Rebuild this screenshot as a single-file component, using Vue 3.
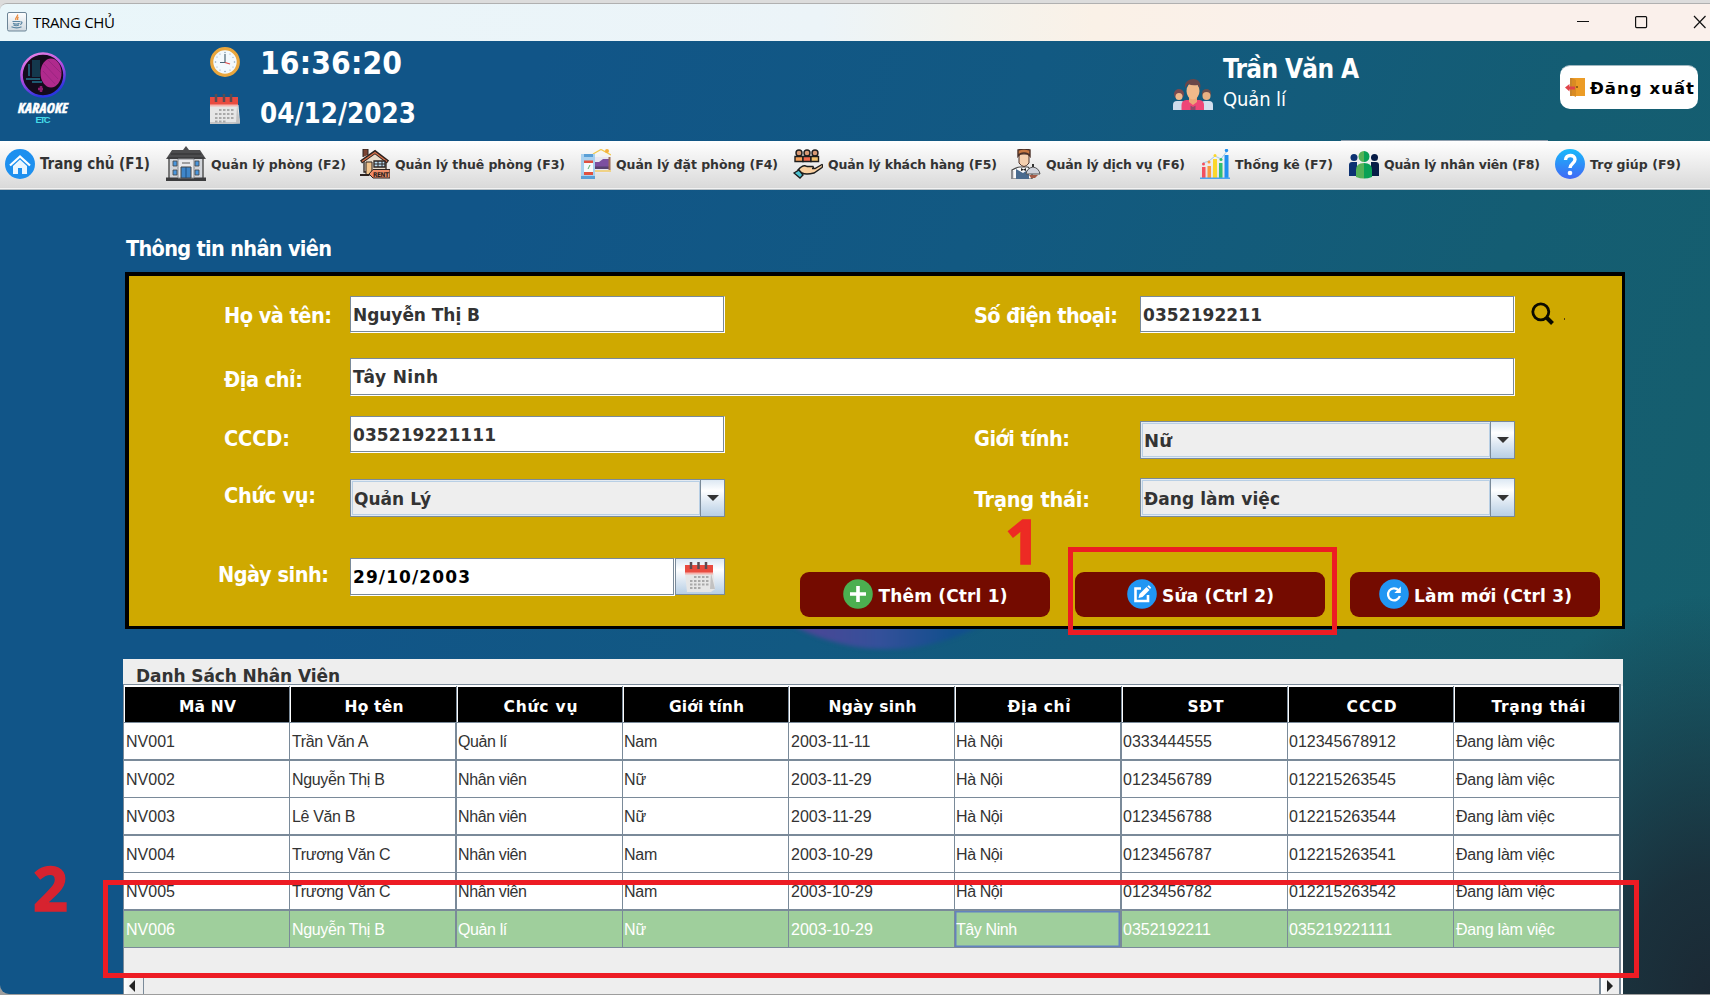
<script setup>
// Tracks the letters of a label so that it fills the given width in pixels.
const vFit = {
  mounted(el, { value }) {
    if (!value) return
    const count = el.textContent.normalize('NFC').length
    const width = el.getBoundingClientRect().width
    const gap = (value - width) / Math.max(count - 1, 1)
    el.style.letterSpacing = `${gap.toFixed(3)}px`
    el.style.marginRight = `${(-gap).toFixed(3)}px`
  },
}

const menu = [
  { icon: 'home', text: 'Trang chủ (F1)', w: 110, big: true },
  { icon: 'building', text: 'Quản lý phòng (F2)', w: 135 },
  { icon: 'rent', text: 'Quản lý thuê phòng (F3)', w: 170 },
  { icon: 'booking', text: 'Quản lý đặt phòng (F4)', w: 162 },
  { icon: 'customers', text: 'Quản lý khách hàng (F5)', w: 169 },
  { icon: 'waiter', text: 'Quản lý dịch vụ (F6)', w: 139 },
  { icon: 'chart', text: 'Thống kê (F7)', w: 98 },
  { icon: 'staff', text: 'Quản lý nhân viên (F8)', w: 156 },
  { icon: 'help', text: 'Trợ giúp (F9)', w: 91 },
]

const columns = [
  { text: 'Mã NV', w: 57 },
  { text: 'Họ tên', w: 59 },
  { text: 'Chức vụ', w: 74 },
  { text: 'Giới tính', w: 75 },
  { text: 'Ngày sinh', w: 88 },
  { text: 'Địa chỉ', w: 63 },
  { text: 'SĐT', w: 36 },
  { text: 'CCCD', w: 50 },
  { text: 'Trạng thái', w: 94 },
]

const rows = [
  ['NV001', 'Trần Văn A', 'Quản lí', 'Nam', '2003-11-11', 'Hà Nội', '0333444555', '012345678912', 'Đang làm việc'],
  ['NV002', 'Nguyễn Thị B', 'Nhân viên', 'Nữ', '2003-11-29', 'Hà Nội', '0123456789', '012215263545', 'Đang làm việc'],
  ['NV003', 'Lê Văn B', 'Nhân viên', 'Nữ', '2003-11-29', 'Hà Nội', '0123456788', '012215263544', 'Đang làm việc'],
  ['NV004', 'Trương Văn C', 'Nhân viên', 'Nam', '2003-10-29', 'Hà Nội', '0123456787', '012215263541', 'Đang làm việc'],
  ['NV005', 'Trương Văn C', 'Nhân viên', 'Nam', '2003-10-29', 'Hà Nội', '0123456782', '012215263542', 'Đang làm việc'],
  ['NV006', 'Nguyễn Thị B', 'Quản lí', 'Nữ', '2003-10-29', 'Tây Ninh', '0352192211', '035219221111', 'Đang làm việc'],
]
</script>

<template>
  <div class="screen">
    <div class="window">
      <div class="titlebar">
        <svg class="java" viewBox="0 0 20 20">
          <defs><linearGradient id="jv" x1="0" y1="0" x2="0" y2="1"><stop offset="0" stop-color="#fff" /><stop offset="1" stop-color="#cfd9e0" /></linearGradient></defs>
          <rect x=".5" y=".5" width="19" height="18.5" rx="1.5" fill="url(#jv)" stroke="#6d8597" />
          <path d="M10.5 2.5c1 2-3 3-1.500 5.500M11.500 5c-1.500 1-1 1.800-.8 3" fill="none" stroke="#ea8a3c" stroke-width="1.300" />
          <path d="M5.500 9.500h7.500M6 11.300c1.500 1 5 1 6.500 0M6.500 13c1.500.8 4 .8 5.500 0M4.500 14.800c2.500 1.400 8 1.400 10 0M13.300 9.800c2.500-.5 2 2.200-.3 2.700" fill="none" stroke="#5b86a3" stroke-width="1.200" />
        </svg>
        <span v-fit="82" class="caption">TRANG CHỦ</span>
        <svg class="controls" viewBox="0 0 134 14">
          <g fill="none" stroke="#111" stroke-width="1.200">
            <path d="M1 6.500h12" /><rect x="59.600" y="1.600" width="11" height="11" rx="1" /><path d="M118 1l11.500 12M129.500 1L118 13" />
          </g>
        </svg>
      </div>

      <div class="body">
        <div class="glow"></div>
        <header class="header">
          <div class="logo">
            <svg class="logo-mark" viewBox="0 0 48 46">
              <defs><linearGradient id="ring" x1="0" y1="0" x2=".4" y2="1"><stop offset="0" stop-color="#f08be6" /><stop offset=".55" stop-color="#b04ae0" /><stop offset="1" stop-color="#2b35e0" /></linearGradient></defs>
              <circle cx="24" cy="23" r="21.500" fill="#140b1c" stroke="url(#ring)" stroke-width="2.600" />
              <path d="M13 8h8v17h-8z" fill="#14384d" /><path d="M10 12v12M7 27h14M13 30h10" stroke="#23758c" stroke-width="1.500" />
              <ellipse cx="32" cy="21" rx="10.500" ry="14.500" fill="#b02a8d" /><path d="M25 12l14 15M24 19l12 13M29 8l13 13" stroke="#9a2580" />
              <path d="M22 34v6M19 37h5" stroke="#8d1d6e" stroke-width="2.500" />
            </svg>
            <span v-fit="50" class="logo-name">KARAOKE</span>
            <span v-fit="15" class="logo-sub">ETC</span>
          </div>
          <div class="clock">
            <div class="clock-row">
              <svg width="30" height="30" viewBox="0 0 30 30">
                <circle cx="15" cy="15" r="13.300" fill="#f3f9fd" stroke="#e9a63d" stroke-width="3.200" />
                <g fill="#8ba3b5"><circle cx="15" cy="5.500" r=".8" /><circle cx="15" cy="24.500" r=".8" /><circle cx="5.500" cy="15" r=".8" /><circle cx="24.500" cy="15" r=".8" /><circle cx="20" cy="7" r=".6" /><circle cx="23" cy="10.300" r=".6" /><circle cx="23" cy="20" r=".6" /><circle cx="20" cy="23" r=".6" /><circle cx="10" cy="23" r=".6" /><circle cx="7" cy="20" r=".6" /><circle cx="7" cy="10" r=".6" /><circle cx="10" cy="7" r=".6" /></g>
                <path d="M15 7v8.500H10" fill="none" stroke="#4a6375" stroke-width="1.200" /><path d="M15 15.500l5 1.500" stroke="#e04848" stroke-width="1.200" />
              </svg>
              <span v-fit="142" class="time">16:36:20</span>
            </div>
            <div class="clock-row date-row">
              <svg width="30" height="30" viewBox="0 0 30 30">
                <path d="M0 11h28.500l1.500 18-7 1H0z" fill="#e6e6e6" /><path d="M0 29h30" stroke="#bbb" stroke-width="1.500" /><path d="M27 11l3 18h-4z" fill="#c2c2c2" /><path d="M0 3h28v8H0z" fill="#e94b40" /><path d="M0 10.500h28v2H0z" fill="#f4b4ae" />
                <path d="M6 0v8M14 0v8M21 0v8" stroke="#5b4b52" stroke-width="2.500" />
                <g stroke="#a9a9a9" stroke-width="2" stroke-dasharray="2.500 1.500"><path d="M9 16h15M5 20h19M5 24h19M5 27.500h11" /></g>
              </svg>
              <span v-fit="156" class="date">04/12/2023</span>
            </div>
          </div>
          <div class="user">
            <svg width="40" height="31" viewBox="0 0 40 31">
              <circle cx="6" cy="15" r="5" fill="#7b4a4f" /><circle cx="6" cy="17.500" r="3.500" fill="#f0b98d" /><path d="M0 31v-5q0-4 4-4h4q4 0 4 4v5z" fill="#cfdcec" />
              <circle cx="33.500" cy="14.500" r="4.500" fill="#6d4c4a" /><circle cx="33.500" cy="17" r="4" fill="#e9b183" /><path d="M28 31v-5q0-4 4-4h4q4 0 4 4v5z" fill="#d3dfee" />
              <path d="M8.500 31v-5q0-4.500 5-5h13q4.500.500 4.500 5v5z" fill="#ef4677" /><path d="M16 18h8v5l-4 3-4-3z" fill="#eca878" /><path d="M17.500 31v-4.500l2.500 1.500 2.500-1.500V31z" fill="#8f4a6b" />
              <ellipse cx="20" cy="12" rx="6.500" ry="8.500" fill="#f2b98a" /><path d="M12 9C11 3 16 0 20.500 0S29 4 27 10l-2-4q-6 1-10-1z" fill="#6b4648" />
            </svg>
            <div class="user-text">
              <div><span v-fit="136" class="user-name">Trần Văn A</span></div>
              <div><span v-fit="63" class="user-role">Quản lí</span></div>
            </div>
          </div>
          <button class="logout">
            <svg width="21" height="21" viewBox="0 0 21 21">
              <path d="M6 1h14v18H6z" fill="#ec9c26" /><path d="M7 1l4 2v17l-4-2z" fill="#d98b22" /><path d="M5 1h2v18H5z" fill="#c9852c" /><circle cx="12" cy="10" r="1" fill="#7a4a12" />
              <path d="M0 10.500l4.500-3.500v2.500H10v3H4.500v2z" fill="#e0444a" />
            </svg>
            <span v-fit="104">Đăng xuất</span>
          </button>
        </header>

        <nav class="menu">
          <div class="menu-hover"></div>
          <div v-for="m in menu" :key="m.icon" class="menu-item">
            <svg v-if="m.icon === 'home'" width="30" height="30" viewBox="0 0 30 30">
              <circle cx="15" cy="15" r="15" fill="#1e90ef" /><path d="M5 16.500L15 7.500l10 9" fill="none" stroke="#fff" stroke-width="2.200" /><path d="M15 10.500l7 6.500v8h-5v-6h-4v6H8v-8z" fill="#eaf6ff" />
            </svg>
            <svg v-else-if="m.icon === 'building'" width="40" height="36" viewBox="0 0 40 36">
              <path d="M3 13h34v19H3z" fill="#d2d5da" /><path d="M3 13v19M37 13v19" stroke="#555" stroke-width="1.500" /><path d="M0 13l6-9h11l3-4 3 4h11l6 9z" fill="#4c4c4e" /><path d="M2 12h36M5 8h30" stroke="#2e2e30" stroke-width="1.200" />
              <path d="M0 31.500h40V35H0z" fill="#3c3c3e" /><path d="M12 13h16v19H12z" fill="#e8e9ec" stroke="#87898d" />
              <path d="M15 21h10v11H15z" fill="#3f86c9" stroke="#444" /><path d="M20 21v11" stroke="#1f4f80" /><path d="M16 17h8" stroke="#555" />
              <g fill="#4a96dd" stroke="#444" stroke-width=".8"><path d="M7 15h4v5H7zM29 15h4v5h-4zM7 24h4v5H7zM29 24h4v5h-4z" /></g>
            </svg>
            <svg v-else-if="m.icon === 'rent'" width="30" height="30" viewBox="0 0 30 30">
              <path d="M4 11L15 4l11 7v12H4z" fill="#e8dccb" stroke="#2c2320" stroke-width="1.300" /><path d="M3 8V0h5v6" fill="#7a4433" stroke="#2c2320" /><path d="M1 13L15 3l13 10" fill="none" stroke="#2c2320" stroke-width="3.600" /><path d="M2 12.500L15 3.500l12 9" fill="none" stroke="#d9714a" stroke-width="1.400" />
              <path d="M6 13h6v13H6z" fill="#f2c48c" stroke="#2c2320" /><path d="M14 12h11v6H14z" fill="#b7dbf0" stroke="#2c2320" stroke-width="1.300" /><path d="M18 12v6M22 12v6M14 15h11" stroke="#2c2320" />
              <path d="M0 26h9" stroke="#2c2320" stroke-width="1.800" /><path d="M9 25l4-4.500h17V29H13z" fill="#f08d68" stroke="#2c2320" />
              <text x="13" y="27.500" font-family="DejaVu Sans Condensed, sans-serif" font-size="6.500" font-weight="700" fill="#2c2320" textLength="16">RENT</text>
            </svg>
            <svg v-else-if="m.icon === 'booking'" width="30" height="30" viewBox="0 0 30 30">
              <path d="M12 5l8-4.500L30 6" fill="none" stroke="#f2c94c" stroke-width="1.300" /><circle cx="26" cy="2" r="2" fill="#f6b03d" /><path d="M14 8h14v16H14z" fill="#e8e6f0" /><path d="M14 13h4l4-3h6v9H14z" fill="#7c4fa0" /><path d="M14 17.500h15V20H14z" fill="#57416f" /><path d="M28.500 8v13" stroke="#9c6b58" stroke-width="2" /><path d="M14 21h16v2H14z" fill="#efd286" />
              <path d="M0 5h14v25H0z" fill="#a9d1ef" /><path d="M3 5h9v3H3zM0 27h14v3H0z" fill="#5a9fd6" /><path d="M3 12h9v12H3z" fill="#f6fafc" /><path d="M3 11.500h9v2.500H3zM3 23h9v3H3z" fill="#e0513f" /><path d="M7 20l2-4" fill="none" stroke="#58b070" />
            </svg>
            <svg v-else-if="m.icon === 'customers'" width="30" height="30" viewBox="0 0 30 30">
              <g stroke="#1d1d1d" stroke-width="1.400"><circle cx="6" cy="4" r="3" fill="#d99a75" /><circle cx="14" cy="4" r="3" fill="#d99a75" /><circle cx="22" cy="4" r="3" fill="#d99a75" /><path d="M2 7.500h8v5H2z" fill="#f5a15c" /><path d="M10 7.500h8v5h-8z" fill="#f4694c" /><path d="M18 7.500h7.500v5H18z" fill="#f3c26d" />
                <path d="M5 21q5-6 9-3.500h6q1 2-1 2h3l7-4q1.500 1 0 3l-8 5.500q-8 2-12 0z" fill="#f9cf9f" /><path d="M1 24l5-3 4 5-3 3z" fill="#4cc1cf" /></g>
            </svg>
            <svg v-else-if="m.icon === 'waiter'" width="30" height="30" viewBox="0 0 30 30">
              <path d="M1 30v-9q5-3 8-3h8l4 4v8z" fill="#fafafa" stroke="#444" stroke-width="1.200" /><path d="M5 30V20l7 4 6-4v10z" fill="#4a6b8f" /><path d="M1 22v8" stroke="#8c8c90" stroke-width="2.500" />
              <path d="M8 5h10v9q-5 7-10 0z" fill="#f4cfae" stroke="#4a3028" /><path d="M7 7V1q6-2 12 0v6q-2-3-6-3t-6 3z" fill="#c77843" stroke="#4a3028" stroke-width="1.400" /><path d="M10 19l2.500 1.500L15 19v3l-2.500-1L10 22z" fill="#222" />
              <path d="M15 25q1-6 7-7 6 1 7 7z" fill="#d0d3dc" stroke="#555" /><path d="M22 15v3" stroke="#333" stroke-width="2" /><path d="M18 26h9l-3 3h-4z" fill="#a35b47" />
            </svg>
            <svg v-else-if="m.icon === 'chart'" width="30" height="30" viewBox="0 0 30 30">
              <path d="M2 18h3.500v11H2z" fill="#f4505e" /><path d="M7.500 17H11v12H7.500z" fill="#fb9a3c" /><path d="M13 10h4v19h-4z" fill="#fbd72b" /><path d="M19 14h3.500v15H19z" fill="#2fbf71" /><path d="M24.500 6h4v23h-4z" fill="#2090f0" /><path d="M0 29.300h30" stroke="#4aa3f0" stroke-width="1.400" />
              <path d="M3 14l6-2 6-5 6 3 6-8" fill="none" stroke="#9fc9ea" /><g><circle cx="3.500" cy="15" r="1.500" fill="#f4505e" /><circle cx="9" cy="13" r="1.500" fill="#fb9a3c" /><circle cx="15" cy="6.500" r="1.500" fill="#fbd72b" /><circle cx="21" cy="10.500" r="1.500" fill="#2fbf71" /><circle cx="26.500" cy="1.500" r="1.700" fill="#2090f0" /></g>
            </svg>
            <svg v-else-if="m.icon === 'staff'" width="30" height="30" viewBox="0 0 30 30">
              <g fill="#0d3273"><circle cx="5" cy="8.500" r="3.500" /><path d="M0 27V16q0-3 3-3h5v14z" /></g><g fill="#071c46"><circle cx="25.500" cy="8.500" r="3.500" /><path d="M22 27V13h5q3 0 3 3v11z" /></g>
              <path d="M15 2a5 5 0 000 11M15 14q-8 0-8 7v7q4 1.500 8 1.500z" fill="#55b257" /><path d="M15 2a5 5 0 010 11M15 14q8 0 8 7v7q-4 1.500-8 1.500z" fill="#0aa155" />
            </svg>
            <svg v-else width="30" height="30" viewBox="0 0 30 30">
              <defs><linearGradient id="hp" x1="0" y1="0" x2="0" y2="1"><stop offset="0" stop-color="#18b9fb" /><stop offset="1" stop-color="#4168f5" /></linearGradient></defs>
              <circle cx="15" cy="15" r="15" fill="url(#hp)" /><path d="M10.500 11c0-6 9.500-6 9.500-.5 0 4-5 4-5 8.500" fill="none" stroke="#fff" stroke-width="3.400" /><circle cx="15" cy="24" r="2.300" fill="#fff" />
            </svg>
            <span v-fit="m.w" :class="{ big: m.big }">{{ m.text }}</span>
          </div>
        </nav>

        <h2 class="section-title"><span v-fit="206">Thông tin nhân viên</span></h2>

        <section class="form">
          <label class="l1"><span v-fit="108">Họ và tên:</span></label>
          <div class="field f1"><span v-fit="127">Nguyễn Thị B</span></div>
          <label class="l2"><span v-fit="144">Số điện thoại:</span></label>
          <div class="field f2"><span v-fit="119">0352192211</span></div>
          <div class="search">
            <svg width="24" height="24" viewBox="0 0 24 24"><circle cx="9.800" cy="9.800" r="8" fill="none" stroke="#0b0b00" stroke-width="2.800" /><path d="M15.500 15.500l6 6" stroke="#0b0b00" stroke-width="4" /></svg>
            <i></i>
          </div>

          <label class="l3"><span v-fit="79">Địa chỉ:</span></label>
          <div class="field wide"><span v-fit="85">Tây Ninh</span></div>

          <label class="l4"><span v-fit="66">CCCD:</span></label>
          <div class="field f4"><span v-fit="143">035219221111</span></div>
          <label class="l5"><span v-fit="96">Giới tính:</span></label>
          <div class="combo c5"><div class="combo-text"><span v-fit="28">Nữ</span></div><div class="combo-btn"><i></i></div></div>

          <label class="l6"><span v-fit="92">Chức vụ:</span></label>
          <div class="combo c6"><div class="combo-text"><span v-fit="77">Quản Lý</span></div><div class="combo-btn"><i></i></div></div>
          <label class="l7"><span v-fit="116">Trạng thái:</span></label>
          <div class="combo c7"><div class="combo-text"><span v-fit="136">Đang làm việc</span></div><div class="combo-btn"><i></i></div></div>

          <label class="l8"><span v-fit="111">Ngày sinh:</span></label>
          <div class="datepick">
            <div class="field date-field"><span v-fit="117">29/10/2003</span></div>
            <div class="date-btn">
              <svg width="30" height="30" viewBox="0 0 30 30">
                <path d="M0 11h28.500l1.500 16-4 3H2z" fill="#e6e6e6" /><path d="M26 11l4 16h-5z" fill="#c2c2c2" /><path d="M0 3h28v8H0z" fill="#e94b40" /><path d="M0 10.500h28v2H0z" fill="#f4b4ae" />
                <path d="M6 0v7M13.500 0v7M21 0v7" stroke="#5b4b52" stroke-width="2.500" />
                <g stroke="#a9a9a9" stroke-width="2" stroke-dasharray="2.500 1.500"><path d="M9 15h15M5 19h19M5 22.500h19M5 26h11" /></g>
              </svg>
            </div>
          </div>
          <div class="actions">
            <button>
              <svg width="30" height="30" viewBox="0 0 30 30"><circle cx="15" cy="15" r="14.800" fill="#4caf50" /><path d="M15 7v16M7 15h16" stroke="#fff" stroke-width="3.600" /></svg>
              <span v-fit="129">Thêm (Ctrl 1)</span>
            </button>
            <button>
              <svg width="30" height="30" viewBox="0 0 30 30"><circle cx="15" cy="15" r="14.800" fill="#2196f3" /><path d="M14 9.500H8.500V22H21v-6" fill="none" stroke="#fff" stroke-width="2.600" /><path d="M11.500 19l1-4 7-7 3 3-7 7z" fill="#fff" /><path d="M20.300 7.200l1.500-1 2.300 2.300-1 1.500z" fill="#fff" /></svg>
              <span v-fit="112">Sửa (Ctrl 2)</span>
            </button>
            <button>
              <svg width="30" height="30" viewBox="0 0 30 30"><circle cx="15" cy="15" r="14.800" fill="#2196f3" /><path d="M19.500 11.300A6 6 0 1020.800 17" fill="none" stroke="#fff" stroke-width="2.300" /><path d="M21.800 7.500V14h-6.500z" fill="#fff" /></svg>
              <span v-fit="158">Làm mới (Ctrl 3)</span>
            </button>
          </div>
        </section>

        <section class="list">
          <div class="list-title"><span v-fit="204">Danh Sách Nhân Viên</span></div>
          <div class="scroll">
            <div class="tr head">
              <div v-for="c in columns" :key="c.text" class="th"><span v-fit="c.w">{{ c.text }}</span></div>
            </div>
            <div v-for="(r, i) in rows" :key="i" class="tr row" :class="{ selected: i === 5 }">
              <div v-for="(v, j) in r" :key="j" class="td" :class="{ focus: i === 5 && j === 5, alpha: /[a-z]/.test(v), name: j === 1 }">{{ v }}</div>
            </div>
            <div class="hscroll">
              <div class="arrow left"><i></i></div>
              <div class="arrow right"><i></i></div>
            </div>
          </div>
        </section>
      </div>
    </div>

    <div class="mark-box one"></div>
    <div class="mark-box two"></div>
    <div class="mark-num n1">1</div>
    <div class="mark-num n2">2</div>
  </div>
</template>

<style>
html, body { margin: 0; background: #c9c8c6; }
</style>

<style scoped>
* { box-sizing: border-box; }
.screen { position: relative; width: 1710px; height: 995px; overflow: hidden; background: linear-gradient(#dcdcdc 0 3px, #9d9d9d 900px); font-family: "DejaVu Sans Condensed", "DejaVu Sans", sans-serif; font-stretch: condensed; }
.window { display: flex; flex-direction: column; margin-top: 3px; height: 991px; border-top: 1px solid #b0b0b0; border-radius: 7px 0 0 9px; overflow: hidden; }
span { white-space: nowrap; }
svg { display: block; flex: none; }

.titlebar { display: flex; align-items: center; height: 37px; flex: none; padding-left: 7px; background: linear-gradient(90deg, #e9f6fa 0, #ecf4f8 48%, #f3f3ee 56%, #faf1e7 64%, #faf0eb 80%); }
.java { width: 20px; height: 20px; margin-top: -1px; }
.caption { margin: -2px 0 0 6px; font: 15px "Open Sans", sans-serif; font-stretch: normal; color: #000; }
.controls { width: 134px; height: 14px; margin: -1px 0 0 auto; }

.body { position: relative; flex: 1; min-height: 0; display: flex; flex-direction: column; overflow: hidden;
  background: radial-gradient(ellipse 280px 400px at 100% 100%, #1b2934 0, rgba(27, 41, 52, .85) 30%, rgba(27, 41, 52, 0) 100%), linear-gradient(112deg, #115588 26%, #125982 50%, #145d73 76%, #165f6a 100%); }
.glow { position: absolute; left: 687px; top: 208px; width: 400px; height: 400px; border-radius: 50%; background: linear-gradient(90deg, #4b4796 30%, #34509a 48%, #124f8d 66%); clip-path: inset(200px -9px -9px -9px); filter: blur(2px); }

.header { position: relative; display: flex; height: 100px; flex: none; color: #fff; }
.logo { display: flex; flex-direction: column; align-items: center; width: 86px; padding-top: 11px; }
.logo-mark { width: 48px; height: 46px; }
.logo-name { font: italic 700 15px/19px "Open Sans", sans-serif; font-stretch: 75%; -webkit-text-stroke: .5px #fff; }
.logo-sub { font: 700 9.500px/9px "Liberation Sans", sans-serif; color: #45dbe8; margin-top: -2px; }
.clock { width: 601px; padding: 5px 0 0 124px; }
.clock-row { display: flex; align-items: center; gap: 20px; height: 32px; }
.date-row { margin-top: 17px; }
.clock-row .time { margin-top: 2px; }
.date-row svg { margin-top: -4px; }
.clock-row .date { margin-top: 4px; }
.time { font-size: 31.5px; font-weight: 700; }
.date { font-size: 27.5px; font-weight: 700; }
.user { display: flex; gap: 10px; padding: 38px 0 0 486px; width: 873px; }
.user-text { margin-top: -25px; }
.user-text div { height: 30px; line-height: 30px; }
.user-name { font-size: 26px; font-weight: 700; }
.user-role { font-size: 20px; line-height: 30px; }
.logout { display: flex; align-items: center; gap: 4px; width: 138px; height: 44px; margin: 24px 0 0; padding: 0 0 0 5px; border: 0; border-top: 1px solid #9fb7c0; border-radius: 10px; background: #fff; color: #000; font: 700 16.500px "DejaVu Sans", sans-serif; }
.logout svg { margin-top: -1px; }
.logout span { margin-top: 1px; }

.menu { position: relative; display: grid; grid-template-columns: 161px 194px 221px 212px 218px 189px 149px 206px 1fr; height: 49px; flex: none; padding: 0 0 3px 5px; align-items: center; background: linear-gradient(#fff, #dadada 46px, #d6d6d6 47px, #f2f2f2 47px 48px, #b7bfc4 48px); }
.menu-hover { position: absolute; left: 1341px; top: -1px; width: 207px; height: 1px; background: #8f9fae; }
.menu-item { display: flex; align-items: center; gap: 5px; font: 700 12.500px "DejaVu Sans", sans-serif; font-stretch: normal; color: #333; }
.menu-item .big { font: 700 15px "DejaVu Sans Condensed", "DejaVu Sans", sans-serif; font-stretch: condensed; }

.section-title { margin: 0; flex: none; height: 82px; padding: 46px 0 0 126px; font-size: 21.500px; line-height: 26px; font-weight: 700; color: #fff; }

.form { position: relative; flex: none; margin-left: 125px; width: 1500px; height: 357px; border: 4px solid #000; border-right-width: 3px; border-bottom-width: 3px; background: #cfa900; padding: 20px 0 0 95px;
  display: grid; grid-template-columns: 126px 375px 249px 166px 375px 1fr; grid-template-rows: 62px 58px 63px 79px 60px; align-items: start; }
label { font-size: 21.500px; line-height: 26px; font-weight: 700; color: #fff; }
.field { height: 37px; padding: 1px 0 0 2px; display: flex; align-items: center; background: #fff; border: 1px solid #7a8a99; border-right-color: #fff; border-bottom-color: #fff; box-shadow: inset -1px -1px #7a8a99; font: 700 17px "DejaVu Sans", sans-serif; font-stretch: normal; color: #333; }
.l1, .f1 { grid-row: 1; }
.l1 { grid-column: 1; margin-top: 7px; }
.f1 { grid-column: 2; }
.l2 { grid-row: 1; margin-top: 7px; }
.f2 { grid-column: 5; grid-row: 1; }
.l2, .l5, .l7 { grid-column: 4; }
.search { grid-column: 6; grid-row: 1; display: flex; padding: 6px 0 0 16px; }
.search i { width: 1px; height: 2px; margin: 16px 0 0 9px; background: #5a3d10; }
.l3 { grid-column: 1; grid-row: 2; margin-top: 9px; }
.wide { grid-column: 2 / 6; grid-row: 2; height: 38px; padding-top: 0; }
.l4 { grid-column: 1; grid-row: 3; margin-top: 10px; }
.f4 { grid-column: 2; grid-row: 3; }
.l5 { grid-row: 3; margin-top: 10px; }
.c5 { grid-column: 5; grid-row: 3; margin-top: 5px; }
.l6 { grid-column: 1; grid-row: 4; margin-top: 4px; }
.c6 { grid-column: 2; grid-row: 4; }
.l7 { grid-row: 4; margin-top: 8px; }
.combo.c7 { grid-column: 5; grid-row: 4; margin-top: -1px; height: 39px; }
.c7 .combo-text { padding-top: 2px; }
.l8 { grid-column: 1; grid-row: 5; margin: 4px 0 0 -6px; }
.datepick { grid-column: 2; grid-row: 5; display: flex; }
.date-field { width: 325px; height: 38px; color: #000; padding-top: 0; }
.date-btn { width: 50px; height: 37px; display: flex; justify-content: center; align-items: center; border: 1px solid #7a8a99; background: linear-gradient(#dce8f3, #fff 30%, #dfe9f3 60%, #b8cfe5); }
.combo { height: 38px; display: flex; border: 1px solid #7a8a99; }
.combo-text { flex: 1; display: flex; align-items: center; margin: 1px 0 1px 1px; padding: 1px 0 0 1px; border: 1px solid #b8cfe5; background: #eee; font: 700 17px "DejaVu Sans", sans-serif; font-stretch: normal; color: #333; box-shadow: 0 0 0 1px #e3eaf2; clip-path: inset(-1px 0 -1px -1px); }
.c5 .combo-text { font-size: 18px; }
.combo-btn { width: 24px; border-left: 1px solid #7a8a99; background: linear-gradient(#dce8f3, #fff 30%, #dfe9f3 60%, #b8cfe5); display: flex; justify-content: center; align-items: center; }
.combo-btn i { border: 6px solid transparent; border-top-color: #333; border-bottom: 0; }
.actions { grid-column: 3 / 7; grid-row: 5; display: flex; gap: 25px; margin: 14px 0 0 75px; }
.actions button { width: 250px; height: 45px; display: flex; align-items: center; justify-content: center; gap: 5px; padding: 0 0 0 1px; border: 0; border-radius: 9px; background: #740b00; color: #fff; font: 700 17px "DejaVu Sans", sans-serif; }
.actions svg { margin-top: -1px; }
.actions span { margin-top: 2px; }

.list { flex: none; position: relative; margin: 30px 0 0 123px; width: 1500px; height: 335px; background: #eee; }
.list-title { height: 25px; padding: 5px 0 0 13px; font: 700 17px/24px "DejaVu Sans", sans-serif; font-stretch: normal; color: #333; }
.scroll { width: 1498px; height: 311px; border: 1px solid #7a8a99; border-right-width: 2px; box-shadow: 2px 2px #fff; display: flex; flex-direction: column; overflow: hidden; }
.tr { display: grid; grid-template-columns: 166px 167px 166px 166px 166px 167px 166px 166px 1fr; flex: none; }
.head { height: 38px; padding-top: 1px; background: linear-gradient(#fff 0 2px, #000 2px); border-bottom: 1px solid #7a8a99; }
.th { display: flex; align-items: center; justify-content: center; padding: 5px 0 0 2px; border-right: 1px solid #7a8a99; box-shadow: inset 1px 0 #fff; font: 700 15.500px "DejaVu Sans", sans-serif; font-stretch: normal; color: #fff; }
.row { height: 38px; background: #fff; font: 16px "Liberation Sans", Arial, sans-serif; color: #333; border-bottom: 2px solid #7a8a99; }
.row:nth-child(odd) { height: 37px; border-bottom-width: 1px; }
.td { display: flex; align-items: center; padding: 1px 0 0 2px; border-right: 1px solid #7a8a99; overflow: hidden; white-space: nowrap; }
.td.alpha { letter-spacing: -.22px; }
.td.alpha:nth-child(3) { letter-spacing: -.38px; }
.td.name { letter-spacing: -.35px; }
.td:nth-child(3), .td:nth-child(4), .td:nth-child(7), .td:nth-child(8) { padding-left: 1px; }
.td:nth-child(2), .td:nth-child(6) { border-right-width: 2px; }
.td:nth-child(6) { letter-spacing: -.4px; padding-left: 1px; }
.td:last-child, .th:last-child { border-right: 0; }
.th:last-child { padding-left: 4px; }
.selected { background: #9fcf9c; color: #fff; }
.focus { box-shadow: inset 0 0 0 1.500px #6382bf; }
.hscroll { margin-top: auto; height: 17px; display: flex; justify-content: space-between; }
.arrow { width: 20px; display: flex; align-items: center; justify-content: center; background: linear-gradient(90deg, #fff, #eee 8px); }
.left { border-right: 1px solid #7a8a99; }
.right { border-left: 2px solid #7a8a99; }
.arrow i { border: 6px solid transparent; }
.left i { border-left: 0; border-right: 6px solid #222; margin-right: 3px; }
.right i { border-right: 0; border-left: 6px solid #222; }

.mark-box { position: absolute; border: 5px solid #ed1c24; }
.one { left: 1068px; top: 547px; width: 269px; height: 88px; }
.two { left: 103px; top: 880px; width: 1536px; height: 98px; }
.mark-num { position: absolute; font: 700 61px/63px "Open Sans", sans-serif; font-stretch: normal; color: #ed2a24; -webkit-text-stroke: 1.500px currentColor; }
.n1 { left: 1005px; top: 509px; }
.n2 { left: 33px; top: 856px; color: #d7232f; }
</style>
